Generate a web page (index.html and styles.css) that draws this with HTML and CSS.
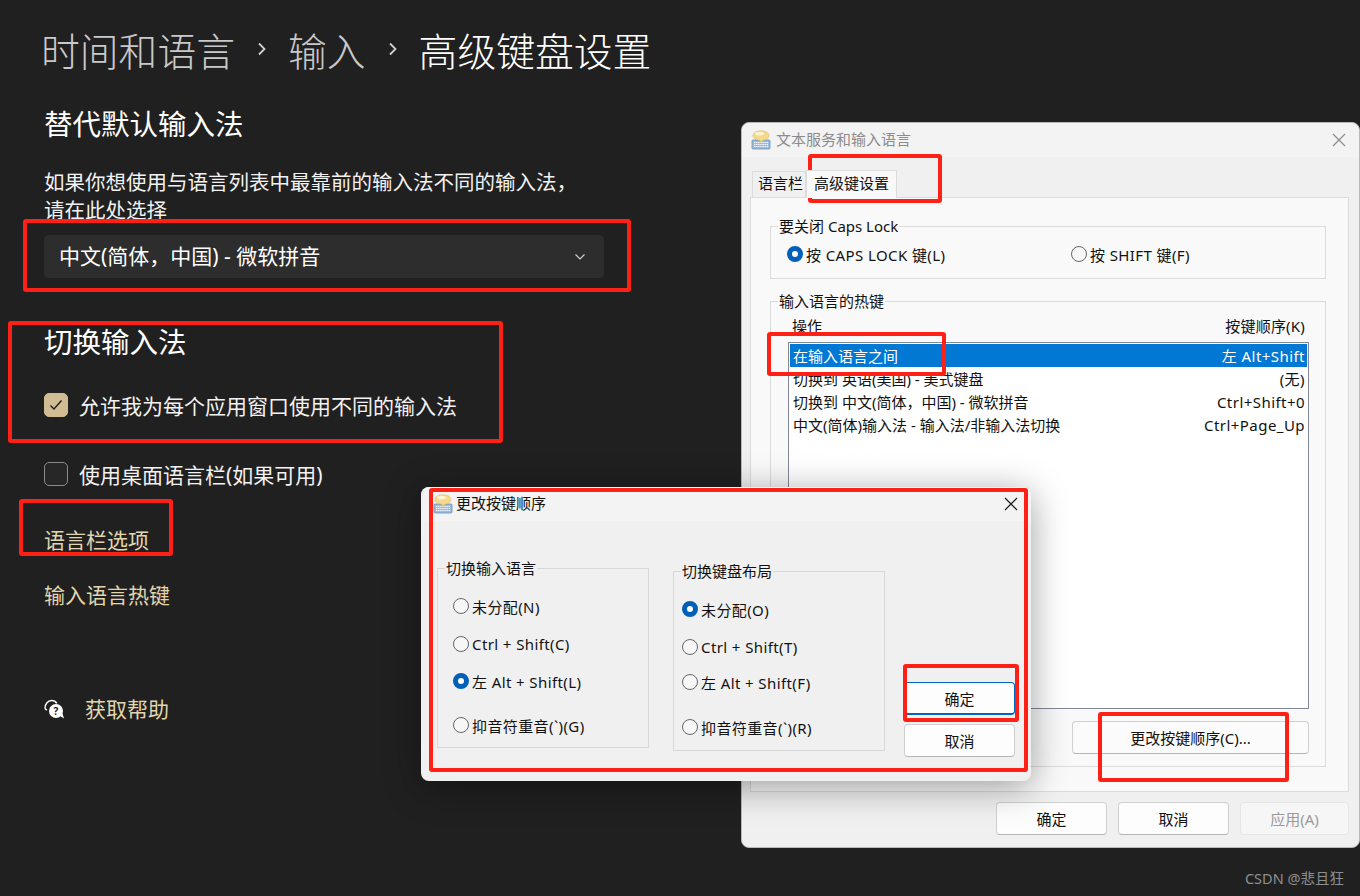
FILE: index.html
```html
<!DOCTYPE html>
<html lang="zh-CN">
<head>
    <meta charset="UTF-8">
    <meta name="viewport" content="width=device-width, initial-scale=1.0">
    <title>高级键盘设置</title>
    <link rel="stylesheet" href="styles.css">
</head>
<body>
    <svg class="defs" width="0" height="0">
        <symbol id="kbd-icon" viewBox="0 0 20 20">
            <rect x="1" y="10" width="18" height="9" rx="1" fill="#9dbbdc" stroke="#6d8fb5" stroke-width=".8"/>
            <path d="M3 12.5h14M3 14.5h14M3 16.5h14" stroke="#f4f8fc" stroke-width="1" stroke-dasharray="1.4 .7"/>
            <path d="M10 .8c4.6 0 8 1.9 8 4.8 0 2.5-2.6 4.200-6 4.600l-3 2.200v-2.200c-3.700-.2-7-2-7-4.600C2 2.700 5.400.8 10 .8z" fill="#f5d98c" stroke="#d9b65a" stroke-width=".5"/>
            <ellipse cx="8.500" cy="3.600" rx="4.500" ry="1.800" fill="#fdf3cf"/>
        </symbol>
    </svg>

    <main class="settings">
        <nav class="crumbs">
            <span class="crumb">时间和语言</span>
            <svg class="crumb-sep" width="12" height="16" viewBox="0 0 12 16"><path d="M3 2.500l5.500 5.500-5.500 5.500" fill="none" stroke="#d0d0d0" stroke-width="1.800"/></svg>
            <span class="crumb">输入</span>
            <svg class="crumb-sep" width="12" height="16" viewBox="0 0 12 16"><path d="M3 2.500l5.500 5.500-5.500 5.500" fill="none" stroke="#d0d0d0" stroke-width="1.800"/></svg>
            <span class="crumb crumb-current">高级键盘设置</span>
        </nav>

        <h2 class="section-title">替代默认输入法</h2>
        <p class="section-text">如果你想使用与语言列表中最靠前的输入法不同的输入法，<br>请在此处选择</p>
        <div class="dropdown">
            <span class="dropdown-value">中文(简体，中国) - 微软拼音</span>
            <svg width="12" height="8" viewBox="0 0 12 8"><path d="M1.500 1.500L6 6l4.500-4.500" fill="none" stroke="#cfcfcf" stroke-width="1.200"/></svg>
        </div>

        <h2 class="section-title switch-title">切换输入法</h2>
        <label class="check-row check-first">
            <span class="check check-on">
                <svg width="14" height="12" viewBox="0 0 14 12"><path d="M1.500 6.500l3.500 3.500 7.500-8.500" fill="none" stroke="#1c1c1c" stroke-width="1.400"/></svg>
            </span>
            允许我为每个应用窗口使用不同的输入法
        </label>
        <label class="check-row check-second">
            <span class="check"></span>
            使用桌面语言栏(如果可用)
        </label>

        <a class="link link-first">语言栏选项</a>
        <a class="link link-second">输入语言热键</a>

        <div class="help">
            <svg width="21" height="21" viewBox="0 0 21 21">
                <path d="M1 9.500C1 4.800 4 1.500 7.500 1.500c2.400 0 4.200 1 5.300 2.800" fill="none" stroke="#fff" stroke-width="1.500"/>
                <path d="M1 9.500l1.800 1.600" fill="none" stroke="#fff" stroke-width="1.500"/>
                <circle cx="12" cy="12" r="7" fill="#fff"/>
                <path d="M16 17l4 2.500-1.500-5z" fill="#fff"/>
                <text x="12" y="15.500" class="help-mark">?</text>
            </svg>
            <a class="link">获取帮助</a>
        </div>
    </main>

    <section class="window window-text">
        <header class="titlebar titlebar-idle">
            <svg class="win-icon" width="20" height="20"><use href="#kbd-icon"/></svg>
            <span class="win-title">文本服务和输入语言</span>
            <svg class="win-close" width="14" height="14" viewBox="0 0 14 14"><path d="M1 1l12 12M13 1L1 13" stroke="#8c8c8c" stroke-width="1.200"/></svg>
        </header>
        <div class="win-body">
            <div class="tabs">
                <span class="tab">语言栏</span>
                <span class="tab tab-active">高级键设置</span>
            </div>
            <div class="panel">
                <fieldset class="group group-caps">
                    <legend>要关闭 Caps Lock</legend>
                    <div class="caps-row">
                        <span class="radio-row"><i class="radio radio-on"></i>按 CAPS LOCK 键(L)</span>
                        <span class="radio-row"><i class="radio"></i>按 SHIFT 键(F)</span>
                    </div>
                </fieldset>
                <fieldset class="group group-hotkeys">
                    <legend>输入语言的热键</legend>
                    <div class="list-head"><span>操作</span><span class="keys-text">按键顺序(K)</span></div>
                    <div class="list">
                        <div class="list-item list-item-selected"><span>在输入语言之间</span><span class="keys-text">左 Alt+Shift</span></div>
                        <div class="list-item"><span>切换到 英语(美国) - 美式键盘</span><span class="keys-text">(无)</span></div>
                        <div class="list-item"><span>切换到 中文(简体，中国) - 微软拼音</span><span class="keys-text">Ctrl+Shift+0</span></div>
                        <div class="list-item"><span>中文(简体)输入法 - 输入法/非输入法切换</span><span class="keys-text">Ctrl+Page_Up</span></div>
                    </div>
                    <div class="list-actions"><button class="btn btn-wide">更改按键顺序(C)...</button></div>
                </fieldset>
            </div>
            <div class="win-actions">
                <button class="btn">确定</button>
                <button class="btn">取消</button>
                <button class="btn btn-disabled">应用(A)</button>
            </div>
        </div>
    </section>

    <section class="window window-keys">
        <header class="titlebar">
            <svg class="win-icon" width="20" height="20"><use href="#kbd-icon"/></svg>
            <span class="win-title win-title-active">更改按键顺序</span>
            <svg class="win-close" width="14" height="14" viewBox="0 0 14 14"><path d="M1 1l12 12M13 1L1 13" stroke="#1a1a1a" stroke-width="1.200"/></svg>
        </header>
        <div class="keys-body">
            <fieldset class="group key-group key-group-lang">
                <legend>切换输入语言</legend>
                <span class="radio-row"><i class="radio"></i>未分配(N)</span>
                <span class="radio-row"><i class="radio"></i>Ctrl + Shift(C)</span>
                <span class="radio-row"><i class="radio radio-on"></i>左 Alt + Shift(L)</span>
                <span class="radio-row"><i class="radio"></i>抑音符重音(`)(G)</span>
            </fieldset>
            <fieldset class="group key-group key-group-layout">
                <legend>切换键盘布局</legend>
                <span class="radio-row"><i class="radio radio-on"></i>未分配(O)</span>
                <span class="radio-row"><i class="radio"></i>Ctrl + Shift(T)</span>
                <span class="radio-row"><i class="radio"></i>左 Alt + Shift(F)</span>
                <span class="radio-row"><i class="radio"></i>抑音符重音(`)(R)</span>
            </fieldset>
            <div class="keys-actions">
                <button class="btn btn-default">确定</button>
                <button class="btn">取消</button>
            </div>
        </div>
    </section>

    <!-- red boxes drawn over the screenshot -->
    <div class="mark mark-dropdown"></div>
    <div class="mark mark-switch"></div>
    <div class="mark mark-link"></div>
    <div class="mark mark-tab"></div>
    <div class="mark mark-row"></div>
    <div class="mark mark-window"></div>
    <div class="mark mark-ok"></div>
    <div class="mark mark-change"></div>

    <div class="watermark">CSDN @悲且狂</div>
</body>
</html>
```

FILE: styles.css
```css
* {
    box-sizing: border-box;
}

body {
    margin: 0;
    width: 1360px;
    height: 896px;
    position: relative;
    overflow: hidden;
    background-color: #202020;
    color: #fff;
    font-family: "Noto Sans", "Noto Sans CJK SC", sans-serif;
}

.defs {
    position: absolute;
}

/* settings page */
.settings {
    padding: 25px 0 0 44px;
}

.crumbs {
    display: flex;
    align-items: center;
    height: 52px;
    margin-left: -3px;
}

.crumb {
    font-size: 38.8px;
    color: #c9c9c9;
    line-height: 52px;
    font-weight: 300;
}

.crumb-current {
    color: #fff;
}

.crumb-sep {
    margin: 0 0 4px 21px;
}

.crumb-sep + .crumb {
    margin-left: 20px;
}

.section-title {
    font-size: 28.5px;
    font-weight: 400;
    line-height: 40px;
    margin: 27px 0 0;
}

.section-text {
    font-size: 20.5px;
    line-height: 28px;
    margin: 24px 0 0;
    color: #f2f2f2;
}

.dropdown {
    width: 560px;
    height: 43px;
    margin-top: 11px;
    padding: 0 18px 0 15px;
    background-color: #2d2d2d;
    border-radius: 5px;
    display: flex;
    align-items: center;
    justify-content: space-between;
    font-size: 21px;
}

.dropdown-value {
    margin-bottom: 3px;
}

.switch-title {
    margin-top: 44px;
}

.check-row {
    display: flex;
    align-items: center;
    gap: 11px;
    height: 28px;
    font-size: 21px;
    color: #f2f2f2;
}

.check-first {
    margin-top: 29px;
}

.check-second {
    margin-top: 41px;
}

.check {
    width: 24px;
    height: 24px;
    border-radius: 5px;
    border: 1px solid #8a8a8a;
    background-color: #272727;
    display: flex;
    align-items: center;
    justify-content: center;
}

.check-on {
    background-color: #d0bd93;
    border-color: #d0bd93;
}

.link {
    display: block;
    font-size: 21px;
    line-height: 28px;
    color: #e1d6ae;
}

.link-first {
    margin-top: 38px;
}

.link-second {
    margin-top: 27px;
}

.help {
    display: flex;
    align-items: center;
    gap: 20px;
    margin-top: 86px;
}

.help-mark {
    font-size: 10px;
    font-weight: 700;
    text-anchor: middle;
    fill: #222;
}

/* dialogs */
.window {
    position: absolute;
    background-color: #f0f0f0;
    color: #111;
    border-radius: 8px;
    overflow: hidden;
    font-size: 15px;
}

.window-text {
    left: 741px;
    top: 122px;
    width: 619px;
    height: 726px;
    border: 1px solid #b9b9b9;
}

.window-keys {
    left: 421px;
    top: 487px;
    width: 610px;
    height: 294px;
    box-shadow: 0 6px 36px rgba(0, 0, 0, .38);
    overflow: visible;
}

.titlebar {
    height: 34px;
    display: flex;
    align-items: center;
    padding: 0 13px 0 9px;
    background-color: #f3f3f3;
    border-radius: 8px 8px 0 0;
}

.window-keys .titlebar {
    padding-left: 12px;
}

.window-keys .win-title {
    margin-left: 3px;
}

.win-icon {
    flex: none;
}

.win-title {
    margin: 0 0 3px 5px;
    color: #8c8c8c;
    flex: 1;
}

.win-title-active {
    color: #111;
}

.win-body {
    padding: 12px 10px 0 8px;
}

.tabs {
    display: flex;
    align-items: flex-end;
    height: 28px;
    padding-left: 2px;
}

.tab {
    height: 26px;
    line-height: 23px;
    padding: 0 2px 0 5px;
    border: 1px solid #dcdcdc;
    border-bottom: none;
    background-color: #f0f0f0;
}

.tab-active {
    height: 28px;
    line-height: 25px;
    padding: 0 7px;
    background-color: #f9f9f9;
    position: relative;
    margin-bottom: -1px;
    z-index: 1;
}

.panel {
    height: 595px;
    border: 1px solid #dcdcdc;
    background-color: #f9f9f9;
    padding: 18px 22px 0 19px;
}

.group {
    margin: 0;
    padding: 0;
    border: 1px solid #dcdcdc;
    min-width: 0;
}

.group legend {
    padding: 0 1px;
    margin-left: 7px;
    line-height: 20px;
}

.group-caps {
    height: 63px;
}

.caps-row {
    display: flex;
    padding: 0 0 0 16px;
    height: 36px;
    align-items: center;
}

.caps-row .radio-row {
    flex: none;
    width: 284px;
}

.radio-row {
    display: flex;
    align-items: center;
    gap: 3px;
    white-space: nowrap;
    letter-spacing: .4px;
}

.radio {
    flex: none;
    width: 16px;
    height: 16px;
    border-radius: 50%;
    border: 1px solid #666;
    background-color: #f7f7f7;
}

.radio-on {
    border: 5px solid #005fb8;
    background-color: #fff;
}

.group-hotkeys {
    height: 476px;
    margin-top: 12px;
}

.list-head {
    display: flex;
    justify-content: space-between;
    height: 22px;
    line-height: 22px;
    margin: 4px 16px 5px 17px;
    padding: 0 4px;
}

.keys-text {
    letter-spacing: .45px;
}

.list-head .keys-text {
    letter-spacing: .2px;
}

.list {
    height: 367px;
    margin: 0 16px 0 17px;
    border: 1px solid #82879a;
    background-color: #fff;
    padding: 1px;
}

.list-item {
    display: flex;
    justify-content: space-between;
    height: 23px;
    line-height: 22px;
    padding: 1px 2px 0 3px;
}

.list-item-selected {
    background-color: #0078d4;
    color: #fff;
}

.list-actions {
    display: flex;
    justify-content: flex-end;
    margin: 12px 16px 0 0;
}

.btn {
    width: 111px;
    height: 33px;
    padding: 0;
    font: inherit;
    color: #111;
    background-color: #fdfdfd;
    border: 1px solid #d0d0d0;
    border-bottom-color: #b5b5b5;
    border-radius: 4px;
}

.btn-wide {
    width: 237px;
    background-color: #fbfbfb;
}

.btn-disabled {
    width: 109px;
    color: #9a9a9a;
    background-color: #f6f6f6;
    border-color: #e6e6e6;
}

.btn-default {
    border: 1px solid #0067c0;
    border-bottom-width: 2px;
}

.win-actions {
    display: flex;
    justify-content: flex-end;
    gap: 11px;
    margin-top: 10px;
}

.keys-body {
    position: relative;
    height: 260px;
    display: flex;
}

.key-group {
    width: 212px;
    height: 190px;
    display: grid;
    justify-items: start;
    align-items: center;
    border-color: #d8d8d8;
}

.key-group .radio-row {
    margin-left: 15px;
}

.key-group-layout .radio-row {
    margin-left: 8px;
}

.key-group-lang {
    margin: 37px 0 0 16px;
    padding-top: 9px;
    grid-template-rows: 38px 38px 36px 52px;
}

.key-group-layout {
    margin: 40px 0 0 24px;
    padding-top: 9px;
    grid-template-rows: 38px 37px 34px 56px;
}

.keys-actions {
    display: flex;
    flex-direction: column;
    gap: 9px;
    margin: 161px 0 0 19px;
}

/* annotations */
.mark {
    position: absolute;
    border: 4px solid #ff2116;
    border-radius: 3px;
    pointer-events: none;
}

.mark-dropdown { left: 23px; top: 219px; width: 608px; height: 73px; }
.mark-switch { left: 8px; top: 321px; width: 495px; height: 122px; }
.mark-link { left: 19px; top: 499px; width: 154px; height: 57px; }
.mark-tab { left: 808px; top: 154px; width: 134px; height: 49px; }
.mark-row { left: 767px; top: 332px; width: 179px; height: 44px; }
.mark-window { left: 429px; top: 488px; width: 599px; height: 284px; }
.mark-ok { left: 903px; top: 664px; width: 116px; height: 58px; }
.mark-change { left: 1098px; top: 712px; width: 191px; height: 70px; }

.watermark {
    position: absolute;
    right: 16px;
    bottom: 8px;
    font-size: 14.5px;
    color: #8f8f8f;
}
```
